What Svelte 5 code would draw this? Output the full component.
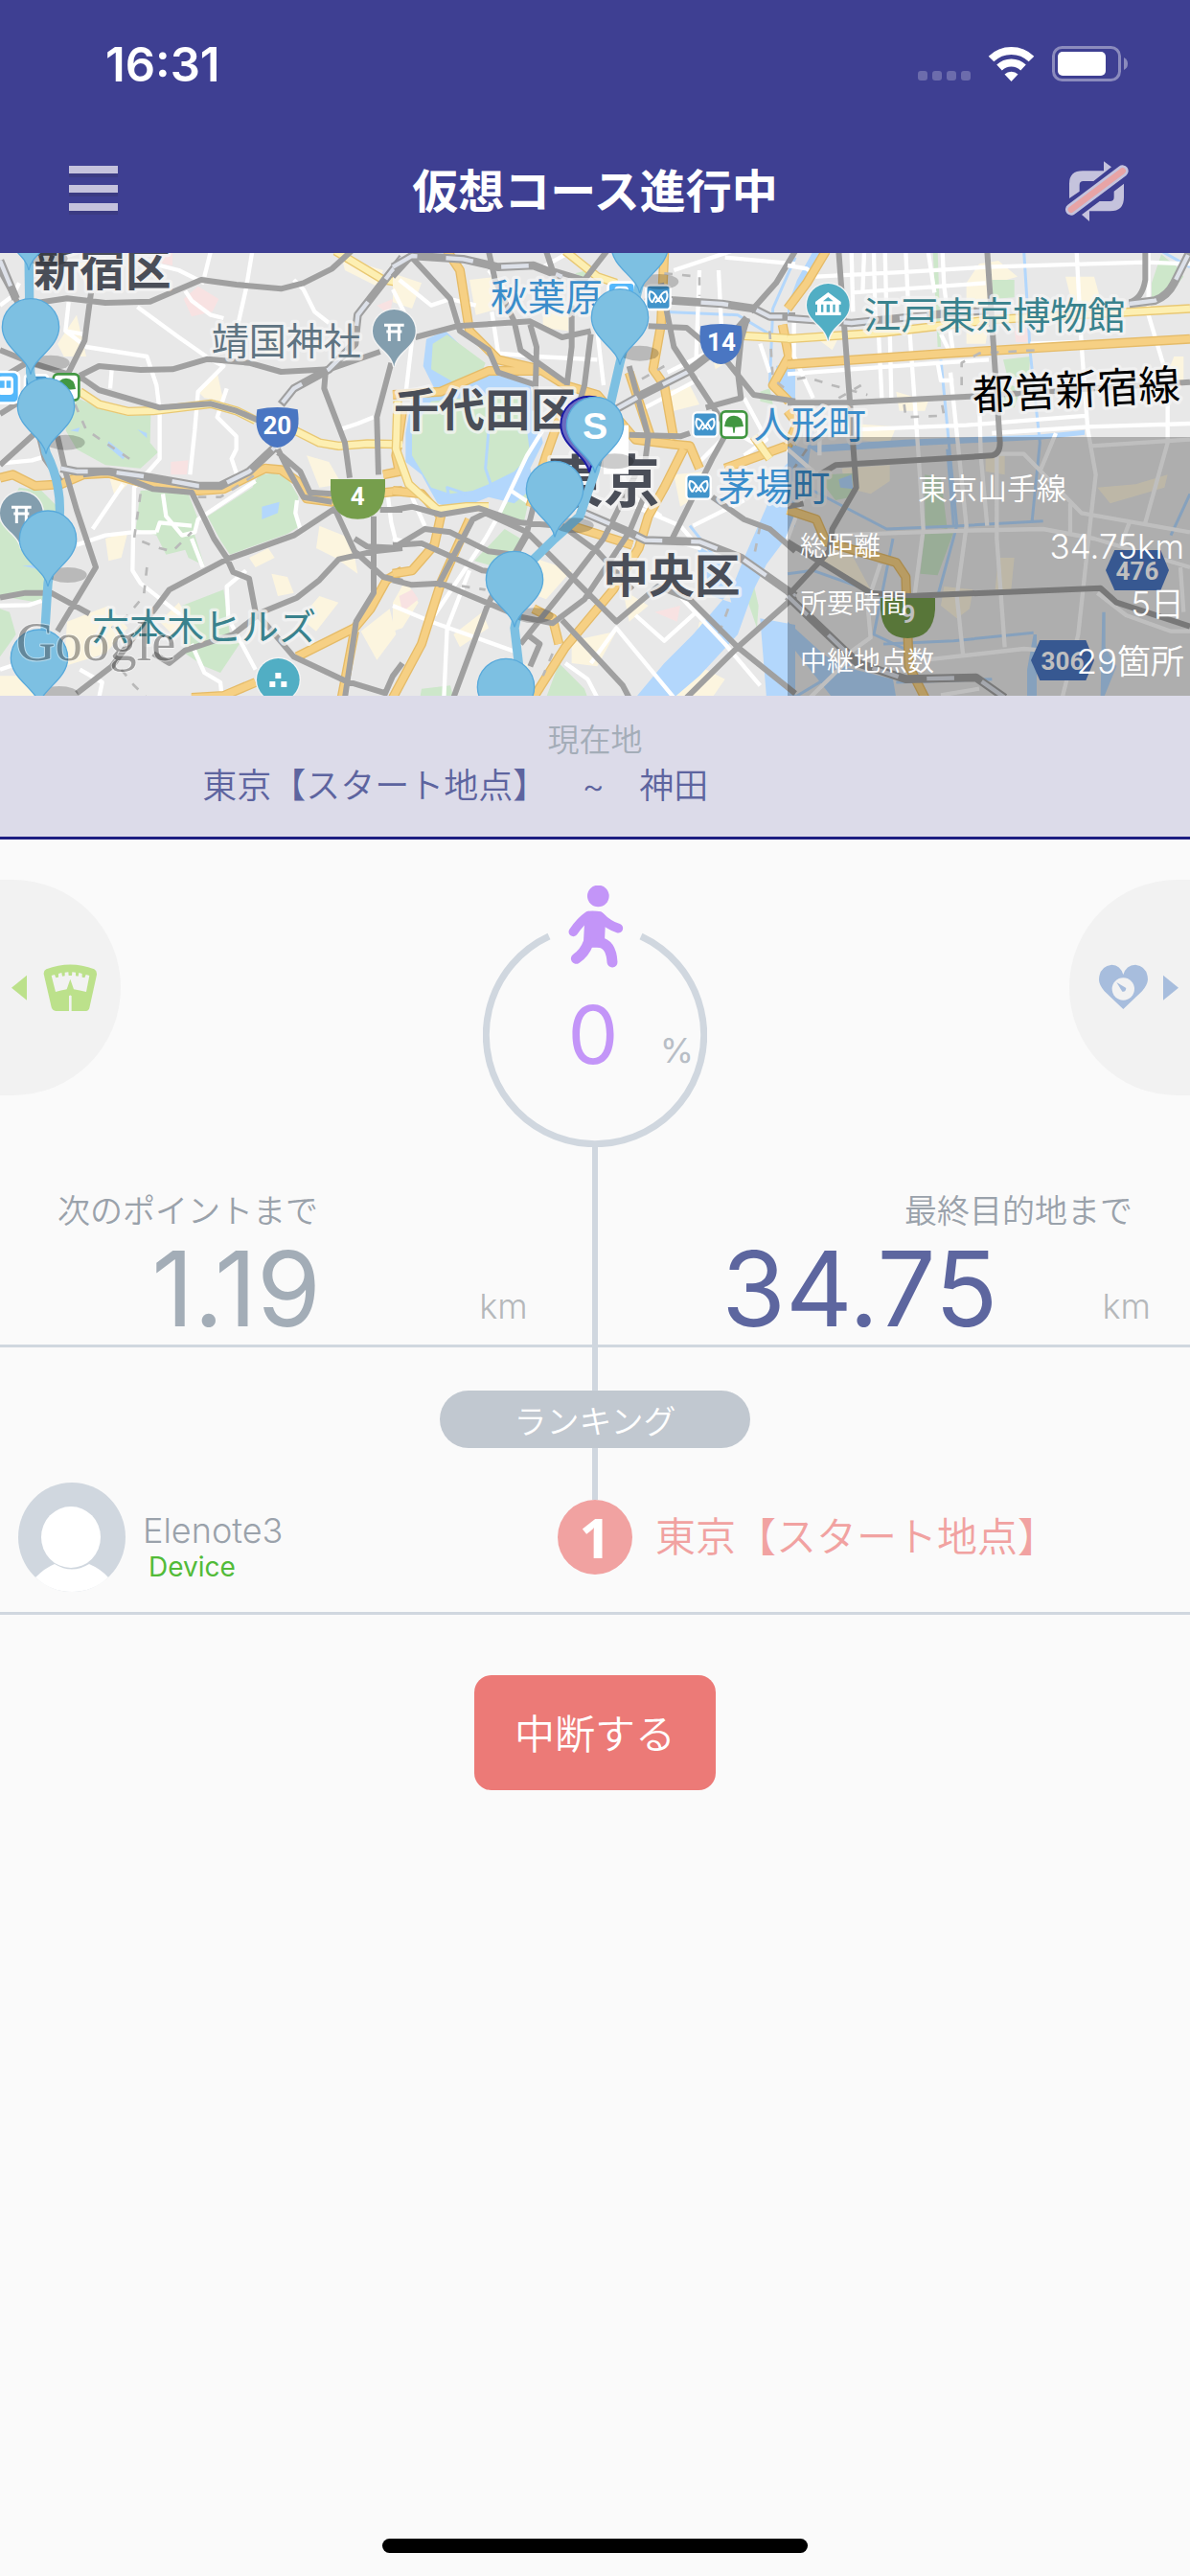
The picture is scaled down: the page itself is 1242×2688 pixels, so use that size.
<script>
const course = {
  name: '東京山手線',
  info: [
    { label: '総距離', value: '34.75km' },
    { label: '所要時間', value: '5日' },
    { label: '中継地点数', value: '29箇所' }
  ],
  from: '東京【スタート地点】',
  to: '神田',
  percent: 0,
  next: '1.19',
  goal: '34.75'
}

// the map is drawn as three tiles side by side
const tiles = [
  {
    x: 0,
    block: ['M240 40L330 20 350 90 270 110Z', 'M180 290L240 200 270 330 200 330Z', 'M620 440L680 380 700 470 640 460Z', 'M350 620L380 590 400 610Z', 'M370 690L400 730 360 770 340 700Z', 'M330 900L400 880 380 960 340 970Z', 'M210 1160L340 1110 400 1180 330 1260 200 1300Z', 'M850 1010L900 1020 920 1070 870 1080Z', 'M1000 860L1100 900 1120 1010 1050 960 990 930Z', 'M780 960L840 930 860 960 800 990Z', 'M960 640L1030 660 1070 730 1000 740Z', 'M0 1330L110 1330 120 1398H0Z', 'M1130 1190L1220 1120 1240 1200 1180 1280Z', 'M940 1150L1000 1080 1060 1100 990 1190Z', 'M500 1160L560 1100 590 1150 540 1200Z', 'M1070 20L1200 60 1180 110 1080 60Z', 'M820 240L870 250 880 330 830 320Z'],
    park: ['M205 560L240 460 340 500 400 515 472 512 470 600 495 630 440 680 330 670 240 620Z', 'M440 750L520 745 590 760 620 840 610 890 640 985 590 960 580 935 520 950 490 890 425 870Z', 'M650 830L790 740 810 700 860 695 900 710 935 770 925 820 940 860 900 885 720 950 690 905Z', 'M0 850L60 740 130 750 180 800 190 830 160 1070 120 1100 0 1080Z', 'M570 1110L700 1060 720 1200 750 1230 690 1320 640 1300 580 1260Z', 'M0 1120L30 1130 50 1200 0 1270Z'],
    pink: ['M575 150L620 110 685 150 665 190 600 205Z', 'M535 660L590 655 585 700 535 700Z', 'M490 0H540V45L490 35Z', 'M1180 170L1230 150 1220 200Z'],
    water: ['M340 595L395 640 385 652 335 610Z', 'M820 800L875 785 870 820 820 840Z', 'M430 558L460 570 460 586Z', 'M70 985L130 982 120 996Z', 'M220 562L250 552 245 566Z'],
    stream: [],
    white: ['M0 170L40 140 60 100', 'M660 0L640 80', 'M790 0L770 120 745 230', 'M480 40L560 60 640 100', 'M580 125L600 155 660 200 700 210', 'M430 175L560 270 660 340 700 360 620 440 610 560 595 700', 'M205 250L270 300 460 330 490 420 500 500 500 650 420 740 415 1000 440 1040 580 1150', 'M920 90L950 120 985 190 1030 225', 'M0 665L100 655 150 640', 'M350 370L345 430', 'M710 430L680 520 740 580 740 620 725 650 745 710', 'M0 1110L90 1108 130 1095', 'M240 920L330 890 415 880 490 880', 'M510 760L520 830 570 890 610 880 620 840 800 720', 'M600 900L635 990', 'M770 1000L710 1050 715 1150 800 1310', 'M310 1398L320 1350 250 1310', 'M600 1230L640 1320 690 1350 695 1398', 'M1060 560L1120 540 1170 520', 'M0 1310L60 1290', 'M290 870L385 730', 'M930 780L925 820 940 870', 'M1215 770L1225 850 1245 930', 'M215 160L205 250 260 260', 'M600 860L500 850 490 880'],
    orange: ['M0 710L40 700 110 735 190 730 260 700 340 695 480 735 620 750 700 745 830 680 880 685 930 720 960 775 1040 785 1170 760 1260 750', 'M1260 1000L1210 1030 1160 1120 1110 1180 930 1270', 'M600 1398L700 1392 800 1350', 'M1260 500L1240 640 1250 690 1200 700', 'M1110 1190L1070 1398'],
    yellow: ['M250 440L310 480 400 502 480 500 660 478 740 500 800 530', 'M920 560L1000 600 1060 610 1150 603 1260 605', 'M1050 0L1200 90 1260 100'],
    rail: ['M0 60L60 170 210 148 330 162 470 158 630 90 740 105 880 118 950 100 1040 55 1100 0', 'M0 310L100 350 260 400 310 435 500 490 660 478 740 500 820 535', 'M285 130L265 280 215 380', 'M250 390L310 360 440 372 540 370 650 338 780 350 880 378 1030 370 1190 315', 'M180 580L205 690 240 810 300 990 180 1190', 'M120 570L140 650 190 720', 'M1020 370L1015 430 1080 600 1095 710', 'M1225 350L1180 520 1185 700', 'M870 620L900 680 950 770 1040 785', 'M870 630L940 690 970 755 1040 760', 'M1260 930L1170 940 1060 965 1000 1030 930 1085 820 1130 730 1200 580 1250 530 1290 480 1260', 'M1050 810L1110 940 1200 1020 1260 1035', 'M1110 900L1150 925 1260 930', 'M1170 830L1170 1070 1115 1160 1080 1398', 'M260 700L340 690 480 745 600 755 670 900 710 960 730 1005 780 1025 800 1130 920 1270 1080 1345 1210 1385', 'M0 1085L80 1070 160 1070 280 1135', 'M240 1385L350 1300 470 1140 530 1060 710 965 920 890 1050 805', 'M0 670L110 570', 'M1200 1398L1230 1330 1260 1290', 'M0 400L100 340', 'M0 510L80 460', 'M1190 810L1260 810'],
    jr: ['M1260 20L1120 200 1110 290 1030 370 920 430 880 480', 'M190 680L240 690 340 690 450 705 620 735 690 735 780 690 860 615', 'M0 30L50 150'],
    walk: ['M235 480L270 560 330 600 420 660', 'M440 760L420 900 500 930 540 940 600 880', 'M460 990L450 1080 400 1140 350 1180', 'M620 770L690 770 800 700', 'M380 1310L420 1360 460 1398']
  },
  {
    x: 1230,
    block: ['M0 70L90 100 60 180 0 160Z', 'M240 90L330 80 370 170 260 200Z', 'M470 180L550 180 550 250 470 240Z', 'M620 480L700 500 690 600 620 600Z', 'M880 700L980 690 1000 740 900 800Z', 'M440 960L560 1000 480 1090 400 1060Z', 'M720 1060L800 1110 740 1160Z', 'M0 1100L40 1030 80 1100 30 1180 0 1190Z', 'M190 1200L280 1130 300 1180 210 1240Z', 'M880 1380L960 1300 1040 1340 1000 1398H880Z', 'M960 1160L1050 1190 1000 1250 950 1210Z', 'M1000 330L1060 280 1060 340 1010 370Z', 'M560 1220L700 1190 640 1300 560 1290Z', 'M380 1320L420 1290 440 1370 400 1398Z', 'M850 440L930 420 960 480 880 500Z'],
    park: ['M480 1398L520 1290 600 1370 610 1398Z', 'M430 680L330 830 410 850 440 720Z', 'M350 870L255 970 400 1010 400 900Z', 'M1150 440L1180 430 1190 480 1150 470Z', 'M1085 1020L1120 1000 1145 1110 1140 1180Z', 'M570 70L610 60 610 90Z', 'M85 1398L90 1370 180 1360 190 1398Z'],
    pink: ['M20 1080L60 1060 80 1090 30 1130Z', 'M820 1130L900 1110 890 1160Z'],
    water: ['M105 275L165 250 300 380 430 420 470 600 430 680 440 740 380 790 300 770 200 810 140 790 90 700 40 660 40 570 60 460 130 430 95 360Z', 'M1260 640L1200 700 1170 800 1100 960 1060 1060 940 1200 850 1290 760 1398H880L960 1330 1080 1200 1130 1060 1170 980 1260 860Z', 'M1150 1150L1260 1170V1398H1170Z', 'M1200 360L1260 340V470L1210 440Z', 'M950 920L1020 960 1060 1100 1000 1080Z'],
    island: ['M125 290L170 262 290 350 270 400 190 410 120 370Z', 'M60 560L120 470 410 440 420 560 430 640 380 690 300 730 250 750 180 760 120 740 60 640Z'],
    stream: ['M1260 20L1190 180 1180 420', 'M840 190L1080 200 1180 260', 'M300 560L290 680 310 740', 'M180 790L170 740 230 760', 'M930 860L1010 960'],
    white: ['M20 90L120 170 180 150 260 170', 'M0 120L40 200 60 280 40 450', 'M310 190L330 320 450 330 640 340', 'M470 560L420 640 330 830 290 900 130 1140', 'M370 750L430 790', 'M0 1110L120 1160 260 1210 400 1260', 'M160 1398L170 1180 240 1000', 'M620 1290L700 1180 880 1398', 'M760 1140L850 1220 950 1130', 'M540 1290L610 1340 640 1398', 'M760 800L900 860 960 930 860 900', 'M940 860L1100 780', 'M640 250L660 420', 'M700 640L740 760 840 830', 'M860 380L960 330 1100 270', 'M790 490L960 400', 'M960 60L950 330', 'M1020 60L1030 260', 'M1040 20L1260 40', 'M880 60L1060 0', 'M1150 290L1180 380', 'M1100 460L1170 590 1100 640', 'M960 660L1060 560 1130 600', 'M470 50L560 0', 'M300 60L350 120 380 220', 'M0 900L120 930', 'M60 770L100 860', 'M880 1060L1040 1230 1150 1360'],
    orange: ['M170 0L210 60 240 250 330 340 460 370 540 420 640 450 760 590 880 605 930 610 960 680', 'M850 0L840 230 815 370 850 420 880 590', 'M0 450L150 440 300 375 460 375', 'M0 750L90 760 150 830 130 920 60 1000 0 1010', 'M530 500L480 640 430 800', 'M910 620L850 740 800 830 770 930 690 1060 540 1240 440 1398', 'M560 860L750 920', 'M440 1120L500 1150 520 1230', 'M1220 230L1240 330 1190 420 1240 470', 'M0 1398L90 1230 150 1040 240 840', 'M1040 680L1260 600', 'M740 380L810 590'],
    yellow: ['M15 470L10 620 50 730 140 810 230 800 300 800', 'M540 0L640 80 700 100', 'M1095 265L1260 275', 'M1130 580L1180 650'],
    rail: ['M60 20L180 150 210 250 300 310 330 380 450 420', 'M70 270L200 235 430 220 530 270 620 250', 'M380 220L400 310 540 410', 'M620 260L600 420 560 560', 'M560 170L560 300 545 420', 'M430 230L450 300 445 500', 'M800 235L920 240 1050 350 1130 450 1260 470', 'M1110 210L1090 280 1080 380 1090 460 980 490', 'M1120 190L1200 100 1260 0', 'M840 100L880 300 1050 560 1000 650 940 770 870 910', 'M740 360L800 580 790 660', 'M740 575L900 580 930 570', 'M0 810L60 800 150 825 270 805 400 850 520 860', 'M0 930L100 870 180 880 300 940 380 950 420 880 440 800', 'M0 920L90 915 280 1000 400 1010', 'M0 1030L60 1045 150 1040 400 1145 500 1165 600 1090 740 880 790 760', 'M190 1398L300 1100 420 890', 'M140 1050L250 840 290 820 420 880 520 980 700 1160 830 1050 930 1090 1080 1240 1260 1385', 'M530 860L640 940 750 1060', 'M530 1155L720 1360 740 1398', 'M920 1398L1080 1240 1260 1080', 'M760 700L660 900 560 1030 400 1230', 'M1000 770L1100 840 1180 870 1260 940', 'M0 80L60 15', 'M480 0L500 60 600 90 670 0', 'M420 1200L460 1230 430 1300', 'M300 0L320 90 380 220'],
    jr: ['M0 50L60 15 220 25 330 50 440 45 530 80', 'M790 140L880 155 1030 165 1130 180 1180 205 1260 205', 'M690 500L780 450 920 380 1050 280 1110 210', 'M600 820L740 880 790 905 960 910 1090 960 1260 1080'],
    walk: ['M850 70L960 80 960 140', 'M160 1040L290 1060', 'M780 400L850 360', 'M1050 1120L1020 1200', 'M1150 860L1130 960', 'M500 1260L470 1330', 'M1180 250L1190 400 1240 440']
  },
  {
    x: 2466,
    block: ['M600 40L660 30 720 80 650 100 620 290 560 290 560 100Z', 'M870 80L960 80 990 190 900 200Z', 'M340 440L440 470 430 500 350 500Z', 'M1210 330L1240 330 1240 410 1190 380Z', 'M200 540L340 550 320 600 210 590Z', 'M170 680L320 670 320 720 260 760 180 740Z', 'M100 950L190 930 260 1060 180 1030 130 1000Z', 'M490 1050L580 1060 570 1120 530 1150 480 1110Z', 'M970 740L1090 730 1190 700 1180 740 1010 790Z', 'M660 960L710 960 700 1060 650 1060Z', 'M620 640L680 640 680 700 620 690Z', 'M100 280L160 270 140 310Z'],
    park: ['M640 90L710 90 710 145 640 150Z', 'M1140 100L1170 10 1220 50 1240 80 1190 140 1140 150Z', 'M675 340L760 330 755 390 690 400Z', 'M430 700L480 710 500 870 430 860Z', 'M430 880L520 880 470 1015 415 1010Z', 'M120 700L205 695 200 770 150 780 120 740Z', 'M670 410L730 430 710 490 670 490Z', 'M455 0H470L480 300H470Z'],
    pink: ['M710 250L760 240 750 285 715 285Z'],
    water: ['M0 170L30 90 80 0H110L60 90 0 200Z', 'M60 610L370 590 780 575 930 560V575L790 590 400 610 90 630Z', 'M0 600L60 620 80 560 60 700 0 760Z', 'M0 1160L110 1260 170 1300 330 1340 340 1398H140L0 1220Z', 'M985 1130H995V1240L1030 1300 990 1398H980Z', 'M160 715L200 700 205 745 165 740Z', 'M770 1200H780V1398H750V1310Z'],
    stream: ['M740 0L760 320 790 600 765 850', 'M480 340L530 860 470 1080', 'M80 750L310 870 540 860 800 845', 'M500 620L520 860', 'M0 1010L80 1000 250 1060', 'M330 900L270 1200 420 1270', 'M300 1230L520 1220 770 1195', 'M20 1398L200 1290', 'M340 1350L640 1340', 'M1200 890L1260 760', 'M1170 0L1260 50'],
    white: ['M0 45L60 55 90 80 380 65 620 50 1120 35 1260 40', 'M200 0L205 190', 'M240 0L235 130', 'M270 0L275 230', 'M305 0L310 200', 'M370 0L380 220 410 640 425 870 400 1060 380 1200', 'M485 0L490 110 520 330', 'M440 0L460 130', 'M200 130L620 100', 'M0 385L200 370 480 350 630 340', 'M20 210L20 330 80 460', 'M285 260L295 460', 'M320 250L325 460', 'M480 260L510 320', 'M470 350L480 405 520 405', 'M760 290L920 285', 'M905 0L920 290 940 560 965 700 950 830 910 1200 860 1398', 'M1130 0L1130 200 1190 400 1190 600 1120 850', 'M190 560L560 545 940 515', 'M640 570L940 550 1260 540', 'M100 560L100 640', 'M600 460L605 640 625 860', 'M655 640L655 900 680 1240', 'M510 380L560 860 530 1080 550 1270', 'M660 635L740 635 920 820 1260 880', 'M950 610L1260 590', 'M790 690L840 570', 'M130 890L560 875 800 870 960 900 1260 990', 'M885 790V880', 'M290 980L250 1100 260 1210 190 1260', 'M430 1280L740 1245 800 1250', 'M970 1070L1060 1140 1200 1190 1260 1190', 'M70 1398L180 1290', 'M480 1390L600 1370', 'M1070 850L1040 930', 'M0 620L80 690 0 900', 'M1230 990L1240 1130'],
    orange: ['M0 355L500 320 920 295 1260 275', 'M120 0L60 100 0 180', 'M0 810L90 840 120 910 340 975 370 1020 380 1300 430 1398', 'M0 500L30 540 0 610'],
    yellow: ['M0 275L300 255 640 215 1260 180'],
    rail: ['M160 0L215 740 140 870 130 940 0 1080', 'M625 0L665 600Q665 635 640 640L150 670 100 700', 'M0 475L190 475 570 455 1260 410', 'M1120 0L1120 90Q1110 150 1070 160', 'M0 910L260 1070 380 1080 980 1055 1030 1100 1260 1175', 'M0 800L50 790'],
    jr: ['M0 210L200 225 500 195 640 185', 'M1070 165L1150 155Q1190 140 1210 100L1260 0', 'M0 1080L220 1290 370 1340 590 1335 680 1398'],
    walk: ['M30 400L60 395 140 420 250 450', 'M160 460L230 420', 'M365 480L370 520 490 515 480 460', 'M545 420L545 350 600 320 780 310', 'M60 620L20 680']
  }
]

const labels = [
  { x: 106, y: 108, text: '新宿区', kind: 'ward' },
  { x: 662, y: 324, text: '靖国神社', kind: 'shrine' },
  { x: 288, y: 1218, text: '六本木ヒルズ', kind: 'spot' },
  { x: 1536, y: 186, text: '秋葉原', kind: 'station' },
  { x: 1232, y: 548, text: '千代田区', kind: 'ward' },
  { x: 1714, y: 786, text: '東京', kind: 'city' },
  { x: 1888, y: 1068, text: '中央区', kind: 'ward' },
  { x: 2360, y: 584, text: '人形町', kind: 'station' },
  { x: 2248, y: 780, text: '茅場町', kind: 'station' },
  { x: 2704, y: 242, text: '江戸東京博物館', kind: 'spot' }
]

const metros = [
  { x: 2061, y: 145 },
  { x: 2208, y: 543 },
  { x: 2187, y: 738 }
]

const pins = [
  [90, -88], [96, 238], [144, 487], [150, 902], [123, 1274],
  [2003, -16], [1941, 208], [1863, 546], [1737, 747], [1611, 1029], [1584, 1365]
]
const pinShape = 'M0 148C-8 96-89 66-89 0A89 89 0 1 1 89 0C89 66 8 96 0 148Z'
</script>

<div class="page">
  <header>
    <div class="status">
      <span class="time">16:31</span>
      <svg class="signal" viewBox="0 0 220 38" aria-hidden="true">
        <g fill="#6c6cac">
          <rect x="0" y="26" width="10" height="10" rx="3" />
          <rect x="15" y="26" width="10" height="10" rx="3" />
          <rect x="30" y="26" width="10" height="10" rx="3" />
          <rect x="45" y="26" width="10" height="10" rx="3" />
        </g>
        <g fill="none" stroke="#fff" stroke-width="8">
          <path d="M76.500 13.500A30 30 0 0 1 118.500 13.500" />
          <path d="M85 22.500A18 18 0 0 1 110 22.500" />
        </g>
        <path d="M97.500 37L90.500 29.500A10 10 0 0 1 104.500 29.500Z" fill="#fff" />
        <rect x="141.500" y="1.500" width="69" height="34" rx="9" fill="none" stroke="#8b8bbd" stroke-width="3" />
        <rect x="146" y="6" width="50" height="25" rx="5" fill="#fff" />
        <path d="M215 12Q219 14 219 18.500T215 25Z" fill="#8b8bbd" />
      </svg>
    </div>
    <nav>
      <button class="icon" aria-label="メニュー">
        <svg class="menu" viewBox="0 0 51 54">
          <g fill="#3a3a78" opacity=".6">
            <rect y="7" width="51" height="6" />
            <rect y="27" width="51" height="6" />
            <rect y="46" width="51" height="6" />
          </g>
          <g fill="#c5c3dd">
            <rect y="1" width="51" height="8" />
            <rect y="21" width="51" height="8" />
            <rect y="40" width="51" height="8" />
          </g>
        </svg>
      </button>
      <h1>仮想コース進行中</h1>
      <button class="icon" aria-label="同期">
        <svg class="sync" viewBox="90 75 210 200">
          <g fill="#c5c3dd">
            <path d="M108 198V152Q108 112 150 112H216V82L240 100 184 144H152Q140 144 140 156V176Z" />
            <path d="M279 152V195Q279 238 236 238H171V270L147 249 203 207H235Q248 207 248 195V176Z" />
          </g>
          <path d="M114 233L275 112" stroke="#c5c3dd" stroke-width="36" stroke-linecap="round" />
          <path d="M114 233L275 112" stroke="#e8a4a6" stroke-width="20" stroke-linecap="round" />
        </svg>
      </button>
    </nav>
  </header>

  <div class="map">
    <svg viewBox="0 6 3726 1386" role="img" aria-label="地図">
      <rect width="3726" height="1398" fill="#e8e8e8" />
      {#each tiles as tile}
        <g transform="translate({tile.x} 0)">
          <path class="block" d={tile.block.join('')} />
          <path class="park" d={tile.park.join('')} />
          <path class="pink" d={tile.pink.join('')} />
          <path class="water" d={tile.water.join('')} />
          {#if tile.island}
            <path class="park" d={tile.island.join('')} />
          {/if}
          <path class="stream" d={tile.stream.join('')} />
          <path class="white" d={tile.white.join('')} />
          <path class="orange-edge" d={tile.orange.join('')} />
          <path class="orange" d={tile.orange.join('')} />
          <path class="yellow-edge" d={tile.yellow.join('')} />
          <path class="yellow" d={tile.yellow.join('')} />
          <path class="walk" d={tile.walk.join('')} />
          <path class="rail" d={tile.rail.join('')} />
          <path class="jr" d={tile.jr.join('')} />
          <path class="jr-dash" d={tile.jr.join('')} />
        </g>
      {/each}

      <!-- road shields -->
      <g class="shield">
        <path d="M805 496Q868 482 932 496Q942 560 915 590Q890 615 868 615Q846 615 822 590Q795 560 805 496Z" fill="#4a76c2" />
        <text x="868" y="574">20</text>
        <path d="M2194 235Q2257 221 2321 235Q2331 299 2304 329Q2279 354 2257 354Q2235 354 2211 329Q2184 299 2194 235Z" fill="#4a76c2" />
        <text x="2259" y="313">14</text>
        <path d="M1035 714H1206V750Q1200 839 1120 839Q1040 839 1035 750Z" fill="#769e4c" />
        <text x="1120" y="795">4</text>
        <path d="M2757 1086H2928V1122Q2922 1212 2842 1212Q2762 1212 2757 1122Z" fill="#769e4c" />
        <text x="2844" y="1165">9</text>
        <path d="M3462 999L3490 936H3634L3660 999 3634 1062H3490Z" fill="#4a76c2" />
        <text x="3561" y="1028">476</text>
        <path d="M3228 1281L3256 1218H3400L3426 1281 3400 1344H3256Z" fill="#4a76c2" />
        <text x="3327" y="1310">306</text>
      </g>

      <!-- places -->
      <g class="place">
        <path transform="translate(1234 250)" d="M0 112C-8 62-67 52-67 0A67 67 0 1 1 67 0C67 52 8 62 0 112Z" fill="#839eae" />
        <path transform="translate(67 820)" d="M0 112C-8 62-67 52-67 0A67 67 0 1 1 67 0C67 52 8 62 0 112Z" fill="#839eae" />
        <path transform="translate(2593 169)" d="M0 112C-8 62-67 52-67 0A67 67 0 1 1 67 0C67 52 8 62 0 112Z" fill="#51aec4" />
        <circle cx="871" cy="1342" r="67" fill="#51aec4" />
      </g>
      <g class="torii">
        <path transform="translate(1234 250)" d="M-31-18H31M-24 2H24M-15-18V32M15-18V32" />
        <path transform="translate(67 820)" d="M-31-18H31M-24 2H24M-15-18V32M15-18V32" />
      </g>
      <path transform="translate(2593 169)" d="M-40-10L0-40 40-10V-2H-40ZM-34-2H-22V24H-34ZM-15-2H-5V24H-15ZM5-2H15V24H5ZM22-2H34V24H22ZM-40 22H40V32H-40Z" fill="#fff" />
      <path transform="translate(2593 169)" d="M-16-12L0-25 16-12Z" fill="#51aec4" />
      <path d="M862 1320h18v18h-18zM844 1347h18v18h-18zM880 1347h18v18h-18z" fill="#fff" />
      <rect x="-30" y="378" width="90" height="98" rx="18" fill="#54b8fb" stroke="#fff" stroke-width="8" />
      <rect x="-6" y="392" width="48" height="58" rx="12" fill="#fff" />
      <path d="M-2 406H14V428H-2ZM20 406H34V428H20Z" fill="#54b8fb" />
      <rect x="78" y="388" width="72" height="72" rx="10" fill="#4194cb" stroke="#fff" stroke-width="8" />
      <g class="ginkgo" transform="translate(207 426)">
        <rect x="-40" y="-41" width="80" height="82" rx="14" />
        <path d="M-30 6Q-26-28 0-28T30 6Q14 8 4 8L2 26H-2L-4 8Q-14 8-30 6Z" />
      </g>
      <g class="ginkgo" transform="translate(2298 543)">
        <rect x="-40" y="-41" width="80" height="82" rx="14" />
        <path d="M-30 6Q-26-28 0-28T30 6Q14 8 4 8L2 26H-2L-4 8Q-14 8-30 6Z" />
      </g>
      <rect x="1904" y="98" width="84" height="84" rx="14" fill="#54b8fb" stroke="#fff" stroke-width="8" />
      <rect x="1924" y="110" width="44" height="50" rx="12" fill="#fff" />
      {#each metros as metro}
        <g transform="translate({metro.x} {metro.y})">
          <rect x="-38" y="-38" width="76" height="76" rx="12" fill="#4194cb" stroke="#fff" stroke-width="7" />
          <path d="M-19 16Q-34 0-26-18Q-12-18-2 6L10 16M19 16Q34 0 26-18Q12-18 2 6L-10 16M-19 16L-8-4M19 16L8-4" fill="none" stroke="#fff" stroke-width="6" />
        </g>
      {/each}

      {#each labels as label}
        <text class={label.kind} x={label.x} y={label.y}>{label.text}</text>
      {/each}
      <text class="line" transform="translate(3048 498) rotate(-3)">都営新宿線</text>

      <rect x="1890" y="545" width="78" height="153" fill="#fff" />
      <path class="route" d="M90 0L95 380 144 630Q190 720 187 820L150 1040 140 1200M2003 100L1941 350 1863 690 1815 830 1737 900 1650 985 1611 1180 1625 1300" />
      {#each pins as [x, y]}
        <ellipse cx={x + 62} cy={y + 112} rx="60" ry="24" fill="#000" opacity=".2" />
      {/each}
      <path d={pinShape} transform="translate(1845 544)" fill="#6a6cc0" stroke="#1a1aa4" stroke-width="6" />
      {#each pins as [x, y]}
        <path d={pinShape} transform="translate({x} {y})" fill="#7dc0e2" stroke="#58a9db" stroke-width="4" />
      {/each}
      <text class="start" x="1863" y="589">S</text>
      <text class="google" x="50" y="1280">Google</text>
    </svg>

    <section class="info">
      <h2>{course.name}</h2>
      <dl>
        {#each course.info as item}
          <div>
            <dt>{item.label}</dt>
            <dd>{item.value}</dd>
          </div>
        {/each}
      </dl>
    </section>
  </div>

  <section class="current">
    <h2>現在地</h2>
    <p>
      <span class="from">{course.from}</span>
      <span class="tilde">~</span>
      <span>{course.to}</span>
    </p>
  </section>

  <main>
    <section class="hero">
      <button class="side left" aria-label="体重">
        <svg viewBox="0 4 378 225">
          <path d="M36 117L84 78V156Z" fill="#bce18b" />
          <path d="M137 74Q136 64 145 59Q220 30 295 59Q304 64 303 76L280 180Q278 189 269 190H224V143Q220 138 216 143V190H175Q164 189 161 178Z" fill="#bce18b" />
          <path d="M161 79L171 76 175 86 183 84 183 73 193 70 195 81 203 80 203 69 214 68 215 79H225L226 68 237 69 237 80 245 81 247 70 257 73 257 84 265 86 269 76 280 79 270 130Q250 126 231 122L220 90 209 122Q190 125 174 130Z" fill="#f2f2f2" />
        </svg>
      </button>
      <div class="gauge">
        <svg viewBox="0 0 702 819">
          <path d="M207 159A341 341 0 1 0 495 159" fill="none" stroke="#d0d7df" stroke-width="21" />
          <g fill="#c395f8" stroke="#c395f8" stroke-linecap="round">
            <circle cx="361" cy="33" r="34" stroke="none" />
            <path d="M330 80Q350 78 370 82Q386 92 383 130L380 194H314L318 120Q318 90 330 80Z" stroke="none" />
            <path d="M330 95Q305 112 283 145M368 98Q390 122 424 134" fill="none" stroke-width="29" />
            <path d="M330 180Q318 212 292 229M366 178Q402 184 405 240" fill="none" stroke-width="33" />
          </g>
        </svg>
        <p class="percent">{course.percent}<span>%</span></p>
      </div>
      <button class="side right" aria-label="血圧">
        <svg viewBox="0 4 378 225">
          <path d="M169 184L110 128Q93 108 93 92Q94 50 133 45Q160 46 169 76Q178 46 207 45Q245 50 246 92Q245 108 228 128Z" fill="#a7bddd" />
          <circle cx="169" cy="121" r="35" fill="#f2f2f2" />
          <path d="M148 100L178 118Q176 132 166 129Z" fill="#a7bddd" />
          <path d="M294 78L342 117 294 156Z" fill="#a7bddd" />
        </svg>
      </button>
    </section>

    <section class="stats">
      <div class="next">
        <h3>次のポイントまで</h3>
        <p><strong>{course.next}</strong><span>km</span></p>
      </div>
      <div class="stem"></div>
      <div class="goal">
        <h3>最終目的地まで</h3>
        <p><strong>{course.goal}</strong><span>km</span></p>
      </div>
    </section>

    <section class="ranking">
      <div class="stem top"></div>
      <button class="rank">ランキング</button>
      <div class="stem mid"></div>
      <div class="row">
        <div class="user">
          <svg viewBox="0 0 112 114" aria-hidden="true">
            <ellipse cx="56" cy="57" rx="56" ry="57" fill="#d0d7df" />
            <path d="M18 99Q28 89 38 85Q56 96 74 85Q86 90 94 99Q78 114 56 114T18 99Z" fill="#fff" />
            <ellipse cx="55" cy="57" rx="31" ry="32" fill="#fff" />
          </svg>
          <div>
            <p class="name">Elenote3</p>
            <p class="device">Device</p>
          </div>
        </div>
        <div class="marker">
          <div class="stem fill"></div>
          <span class="number">1</span>
          <div class="fill"></div>
        </div>
        <p class="point">{course.from}</p>
      </div>
    </section>

    <button class="stop">中断する</button>
  </main>

  <div class="home"></div>
</div>

<style>
:global(body) {
  background: #fafafa;
}
.page {
  min-height: 100vh;
  box-sizing: border-box;
  display: flex;
  flex-direction: column;
  background: #fafafa;
  font-family: Inter, "Noto Sans CJK JP", sans-serif;
  font-weight: 350;
}
h1, h2, h3, p, dl, dd {
  margin: 0;
  font-weight: inherit;
}
button {
  border: 0;
  padding: 0;
  background: none;
  font-family: inherit;
  font-weight: inherit;
}
svg {
  display: block;
}
header {
  background: #3e3f92;
  color: #fff;
}
.status {
  height: 134px;
  padding: 0 64px 0 110px;
  display: flex;
  align-items: center;
  justify-content: space-between;
}
.time {
  font-size: 49px;
  font-weight: 600;
}
.signal {
  width: 220px;
}
nav {
  height: 130px;
  padding: 0 62px;
  display: grid;
  grid-template-columns: 70px 1fr 70px;
  align-items: center;
}
nav h1 {
  padding-bottom: 6px;
  text-align: center;
  font-size: 48px;
  font-weight: 600;
}
.menu {
  width: 51px;
  margin-left: 10px;
}
.sync {
  width: 70px;
}
.map {
  position: relative;
}
.map svg {
  width: 100%;
}
.block { fill: #fcf5df; }
.park { fill: #cde7ca; }
.pink { fill: #f8e2e2; }
.water { fill: #b3d7fc; }
.stream, .white, .orange, .orange-edge, .yellow, .yellow-edge, .rail, .jr, .jr-dash, .walk, .route {
  fill: none;
  stroke-linejoin: round;
}
.stream { stroke: #b3d7fc; stroke-width: 9; }
.white { stroke: #fff; stroke-width: 13; }
.orange-edge { stroke: #e5bb68; stroke-width: 30; }
.orange { stroke: #f6d084; stroke-width: 22; }
.yellow-edge { stroke: #e9c873; stroke-width: 28; }
.yellow { stroke: #fdefb2; stroke-width: 20; }
.walk { stroke: #b9b9b9; stroke-width: 8; stroke-dasharray: 26 30; }
.rail { stroke: #a0a0a0; stroke-width: 18; }
.jr { stroke: #a0a0a0; stroke-width: 26; }
.jr-dash { stroke: #dde1e9; stroke-width: 13; stroke-dasharray: 86 90; }
.route { stroke: #7dc0e2; stroke-width: 28; }
.map text {
  font-family: "Noto Sans CJK JP", sans-serif;
  font-weight: 400;
  font-size: 117px;
  paint-order: stroke;
  stroke: rgba(245, 245, 245, 0.75);
  stroke-width: 20px;
  stroke-linejoin: round;
}
.map .ward, .map .city {
  font-size: 143px;
  font-weight: 700;
  fill: #4a4e58;
}
.map .city {
  font-size: 176px;
}
.map .shrine { fill: #5f7482; }
.map .spot { fill: #39828d; }
.map .station { fill: #3a8dcb; }
.map .line {
  font-size: 130px;
  fill: #000;
}
.map .shield text {
  font-family: Roboto, sans-serif;
  font-size: 78px;
  font-weight: 700;
  fill: #fff;
  stroke: none;
  text-anchor: middle;
}
.map .start {
  font-family: "Liberation Sans", sans-serif;
  font-size: 118px;
  font-weight: 700;
  fill: #fff;
  stroke: none;
  text-anchor: middle;
}
.map .google {
  font-family: "Liberation Serif", serif;
  font-size: 170px;
  fill: #444;
  stroke: #fff;
  stroke-width: 6px;
  opacity: 0.45;
}
.place path, .place circle {
  stroke: #f4f4f4;
  stroke-width: 8;
  paint-order: stroke;
}
.torii {
  fill: none;
  stroke: #fff;
  stroke-width: 9;
}
.ginkgo rect {
  fill: #fff;
  stroke: #429742;
  stroke-width: 8;
}
.ginkgo path {
  fill: #429742;
}
.info {
  position: absolute;
  right: 0;
  bottom: 0;
  width: 420px;
  height: 270px;
  box-sizing: border-box;
  padding: 24px 6px 0 13px;
  background: rgba(0, 0, 0, 0.25);
  color: #fff;
}
.info h2 {
  font-size: 31px;
  line-height: 60px;
  text-align: center;
}
.info dl div {
  display: flex;
  justify-content: space-between;
  line-height: 60px;
}
.info dt {
  font-size: 28px;
}
.info dd {
  font-size: 35px;
}
.current {
  padding: 22px 0 29px;
  background: #dcdbe9;
  border-bottom: 3px solid #1e1e82;
}
.current h2 {
  color: #a4adb8;
  font-size: 33px;
  line-height: 48px;
  text-align: center;
}
.current p {
  display: grid;
  grid-template-columns: 46% 96px 1fr;
  color: #5d649f;
  font-size: 36px;
  line-height: 48px;
}
.from {
  text-align: right;
}
.tilde {
  text-align: center;
}
main {
  display: flex;
  flex-direction: column;
}
.hero {
  padding-top: 42px;
  display: flex;
  justify-content: space-between;
  align-items: flex-start;
}
.side {
  width: 126px;
  height: 225px;
  display: flex;
  align-items: center;
  background: #f2f2f2;
}
.side svg {
  width: 126px;
}
.left {
  border-radius: 0 113px 113px 0;
}
.right {
  border-radius: 113px 0 0 113px;
}
.gauge {
  display: grid;
  margin-top: 6px;
}
.gauge svg, .percent {
  grid-area: 1 / 1;
}
.gauge svg {
  width: 234px;
}
.percent {
  position: relative;
  padding: 39px 4px 0 0;
  color: #c395f8;
  font-size: 84px;
  font-weight: 400;
  line-height: 234px;
  text-align: center;
}
.percent span {
  position: absolute;
  right: 14px;
  top: 55px;
  color: #b8bec6;
  font-size: 36px;
}
.stem {
  background: #d0d7df;
}
.stats {
  display: grid;
  grid-template-columns: 1fr 6px 1fr;
  border-bottom: 3px solid #d0d7df;
}
.stats h3 {
  padding: 0 60px 2px;
  color: #9aa2ab;
  font-size: 34px;
  line-height: 42px;
}
.stats p {
  display: grid;
  grid-template-columns: 5fr 1fr;
  align-items: end;
}
.stats strong {
  color: #a3adb7;
  font-size: 108px;
  font-weight: 400;
  line-height: 116px;
  text-align: center;
}
.stats span {
  padding: 0 0 16px 7px;
  color: #b5b8bb;
  font-size: 36px;
  line-height: 48px;
}
.next, .goal {
  padding-top: 46px;
}
.next p {
  padding-right: 26px;
}
.goal p {
  padding-left: 27px;
}
.goal h3 {
  text-align: right;
}
.goal strong {
  color: #5d669f;
}
.ranking {
  display: flex;
  flex-direction: column;
  align-items: center;
  padding-bottom: 21px;
  border-bottom: 3px solid #d0d7df;
}
.top, .mid {
  width: 6px;
  height: 45px;
}
.mid {
  height: 36px;
}
.rank {
  width: 324px;
  height: 60px;
  border-radius: 30px;
  background: #c1c8d0;
  color: #fff;
  font-size: 34px;
}
.row {
  width: 100%;
  display: grid;
  grid-template-columns: 1fr 78px 1fr;
  align-items: center;
}
.user {
  display: flex;
  align-items: center;
  gap: 18px;
  padding-left: 19px;
}
.user svg {
  width: 112px;
}
.name {
  padding-top: 22px;
  color: #9aa2ab;
  font-size: 36px;
  line-height: 40px;
}
.device {
  padding-left: 6px;
  color: #52bb38;
  font-size: 28px;
  font-weight: 400;
  line-height: 36px;
}
.marker {
  height: 100%;
  display: flex;
  flex-direction: column;
  align-items: center;
}
.fill {
  width: 6px;
  flex: 1;
}
.number {
  width: 78px;
  border-radius: 50%;
  background: #f1a2a1;
  color: #fff;
  font-family: "Open Sans", sans-serif;
  font-size: 58px;
  font-weight: 700;
  line-height: 78px;
  text-align: center;
}
.point {
  padding-left: 24px;
  color: #f1a2a1;
  font-size: 42px;
  line-height: 60px;
}
.stop {
  align-self: center;
  width: 252px;
  height: 120px;
  margin-top: 63px;
  padding-bottom: 4px;
  border-radius: 18px;
  background: #ec7a77;
  color: #fff;
  font-size: 42px;
}
.home {
  width: 444px;
  height: 15px;
  margin: auto auto 24px;
  border-radius: 8px;
  background: #000;
}
</style>
